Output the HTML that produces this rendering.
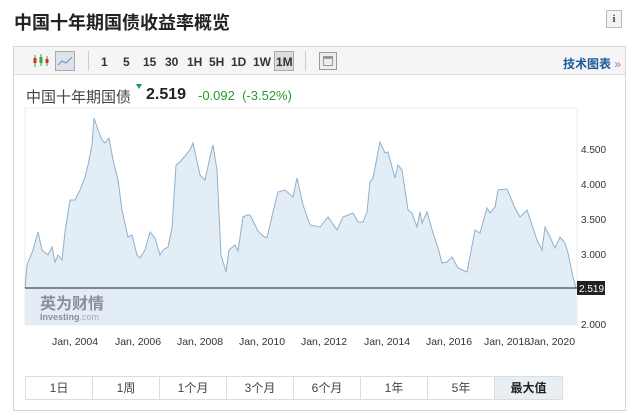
<!DOCTYPE html>
<html><head><meta charset="utf-8"><style>
*{margin:0;padding:0;box-sizing:border-box}
body{width:640px;height:417px;background:#fff;font-family:"Liberation Sans","Noto Sans CJK SC",sans-serif;position:relative;overflow:hidden;color:#333}
.abs{position:absolute}
.title{left:14px;top:9px;font-size:18px;font-weight:bold;color:#222}
.info{left:606px;top:10px;width:16px;height:18px;border:1px solid #bbb;background:#f3f3f3;font-size:11px;text-align:center;line-height:16px;color:#256;font-weight:bold;font-family:"Liberation Serif",serif}
.box{left:13px;top:46px;width:613px;height:365px;border:1px solid #d5d5d5}
.tb{left:14px;top:47px;width:611px;height:28px;background:#f5f5f5;border-bottom:1px solid #ddd}
.tbt{top:55px;font-size:12px;font-weight:bold;color:#333}
.sep{top:51px;width:1px;height:20px;background:#ccc}
.btns{left:25px;top:376px;display:flex;border:1px solid #ddd}
.btns div{width:67px;height:22px;border-right:1px solid #ddd;font-size:12px;text-align:center;line-height:22px;color:#444}
.btns div:last-child{border-right:none;background:#e9eef3;font-weight:bold;color:#222}
.ax{font-size:10px;color:#333}
</style></head><body>
<div class="abs title">中国十年期国债收益率概览</div>
<div class="abs info">i</div>
<div class="abs box"></div>
<div class="abs tb"></div>
<svg class="abs" style="left:32px;top:54px" width="18" height="14"><g stroke="#3a3" stroke-width="1"><line x1="3" y1="1" x2="3" y2="13"/><line x1="9" y1="0" x2="9" y2="12"/><line x1="15" y1="2" x2="15" y2="12"/></g><rect x="1.5" y="4" width="3" height="5" fill="#c33"/><rect x="7.5" y="3" width="3" height="6" fill="#3a3"/><rect x="13.5" y="5" width="3" height="4" fill="#c33"/></svg>
<div class="abs" style="left:55px;top:51px;width:20px;height:20px;border:1px solid #aaa;background:#dde3ea"></div>
<svg class="abs" style="left:57px;top:54px" width="16" height="14"><polyline points="1,11 5,7 9,9 15,3" fill="none" stroke="#6a8fb5" stroke-width="1"/></svg>
<div class="abs sep" style="left:88px"></div>
<div class="abs tbt" style="left:101px">1</div>
<div class="abs tbt" style="left:123px">5</div>
<div class="abs tbt" style="left:143px">15</div>
<div class="abs tbt" style="left:165px">30</div>
<div class="abs tbt" style="left:187px">1H</div>
<div class="abs tbt" style="left:209px">5H</div>
<div class="abs tbt" style="left:231px">1D</div>
<div class="abs tbt" style="left:253px">1W</div>
<div class="abs" style="left:274px;top:51px;width:20px;height:20px;border:1px solid #aaa;background:#dcdcdc"></div>
<div class="abs tbt" style="left:276px">1M</div>
<div class="abs sep" style="left:305px"></div>
<div class="abs" style="left:319px;top:52px;width:18px;height:18px;border:1px solid #999;background:#eee"><div style="margin:3px;height:10px;border:1px solid #999;border-top-width:3px"></div></div>
<div class="abs" style="left:563px;top:55px;font-size:12px;font-weight:bold;color:#1a5a9a">技术图表 <span style="color:#888;font-weight:normal">»</span></div>
<div class="abs" style="left:26px;top:86px;font-size:15px;color:#444">中国十年期国债</div>
<div class="abs" style="left:136px;top:84px;width:0;height:0;border-left:3px solid transparent;border-right:3px solid transparent;border-top:5px solid #1a9a4a"></div>
<div class="abs" style="left:146px;top:86px;font-size:16px;font-weight:bold;color:#222">2.519</div>
<div class="abs" style="left:198px;top:88px;font-size:13px;color:#2a9a2a">-0.092&nbsp;&nbsp;(-3.52%)</div>
<svg class="abs" style="left:0;top:0" width="640" height="417">
<rect x="25" y="108" width="552" height="217" fill="#fff" stroke="#eee"/>
<polygon fill="#e3edf6" stroke="none" points="25,288 27,265 33,250 38,232 42,250 48,255 52,247 55,262 58,255 62,260 65,232 70,200 75,200 80,190 85,177 88,165 92,145 94,118 98,130 102,140 105,143 109,138 113,160 118,180 122,210 128,237 132,235 137,255 140,258 145,250 150,232 155,238 160,255 163,250 168,247 172,228 176,165 180,162 190,150 193,143 200,175 205,180 210,157 213,145 217,170 221,255 226,272 229,250 235,245 238,251 243,217 247,215 250,215 255,225 258,231 263,236 267,238 273,212 278,192 285,190 293,197 297,178 303,205 310,225 320,227 328,217 337,230 343,217 353,213 358,222 363,222 367,212 370,182 373,178 380,142 385,153 388,152 395,178 398,165 402,170 408,210 412,213 417,227 420,212 422,223 427,212 433,233 438,248 442,263 447,262 452,257 458,268 467,272 475,230 480,233 487,208 490,213 495,207 498,190 507,189 515,208 520,217 527,210 537,240 542,250 545,227 550,237 555,248 560,237 565,243 568,253 573,277 576,288 577,325 25,325"/>
<polyline fill="none" stroke="#8fb0cc" stroke-width="1" points="25,288 27,265 33,250 38,232 42,250 48,255 52,247 55,262 58,255 62,260 65,232 70,200 75,200 80,190 85,177 88,165 92,145 94,118 98,130 102,140 105,143 109,138 113,160 118,180 122,210 128,237 132,235 137,255 140,258 145,250 150,232 155,238 160,255 163,250 168,247 172,228 176,165 180,162 190,150 193,143 200,175 205,180 210,157 213,145 217,170 221,255 226,272 229,250 235,245 238,251 243,217 247,215 250,215 255,225 258,231 263,236 267,238 273,212 278,192 285,190 293,197 297,178 303,205 310,225 320,227 328,217 337,230 343,217 353,213 358,222 363,222 367,212 370,182 373,178 380,142 385,153 388,152 395,178 398,165 402,170 408,210 412,213 417,227 420,212 422,223 427,212 433,233 438,248 442,263 447,262 452,257 458,268 467,272 475,230 480,233 487,208 490,213 495,207 498,190 507,189 515,208 520,217 527,210 537,240 542,250 545,227 550,237 555,248 560,237 565,243 568,253 573,277 576,288"/>
<line x1="25" y1="288" x2="577" y2="288" stroke="#222" stroke-width="1"/>
<rect x="577" y="281" width="28" height="14" fill="#222"/>
<text x="579" y="292" font-size="10" fill="#fff" font-family="Liberation Sans">2.519</text>
<g font-size="10" fill="#333" font-family="Liberation Sans">
<text x="581" y="153">4.500</text><text x="581" y="188">4.000</text><text x="581" y="223">3.500</text><text x="581" y="258">3.000</text><text x="581" y="328">2.000</text>
</g>
<g font-size="10.5" fill="#333" font-family="Liberation Sans" text-anchor="middle">
<text x="75" y="345">Jan, 2004</text><text x="138" y="345">Jan, 2006</text><text x="200" y="345">Jan, 2008</text><text x="262" y="345">Jan, 2010</text><text x="324" y="345">Jan, 2012</text><text x="387" y="345">Jan, 2014</text><text x="449" y="345">Jan, 2016</text><text x="507" y="345">Jan, 2018</text><text x="552" y="345">Jan, 2020</text>
</g>
<text x="40" y="309" font-size="16" font-weight="bold" fill="#8a8f98" font-family="Noto Sans CJK SC,sans-serif">英为财情</text>
<text x="40" y="320" font-size="9" font-weight="bold" fill="#8a8f98" font-family="Liberation Sans">Investing<tspan font-weight="normal" fill="#aab">.com</tspan></text>
</svg>
<div class="abs btns"><div>1日</div><div>1周</div><div>1个月</div><div>3个月</div><div>6个月</div><div>1年</div><div>5年</div><div>最大值</div></div>
</body></html>
